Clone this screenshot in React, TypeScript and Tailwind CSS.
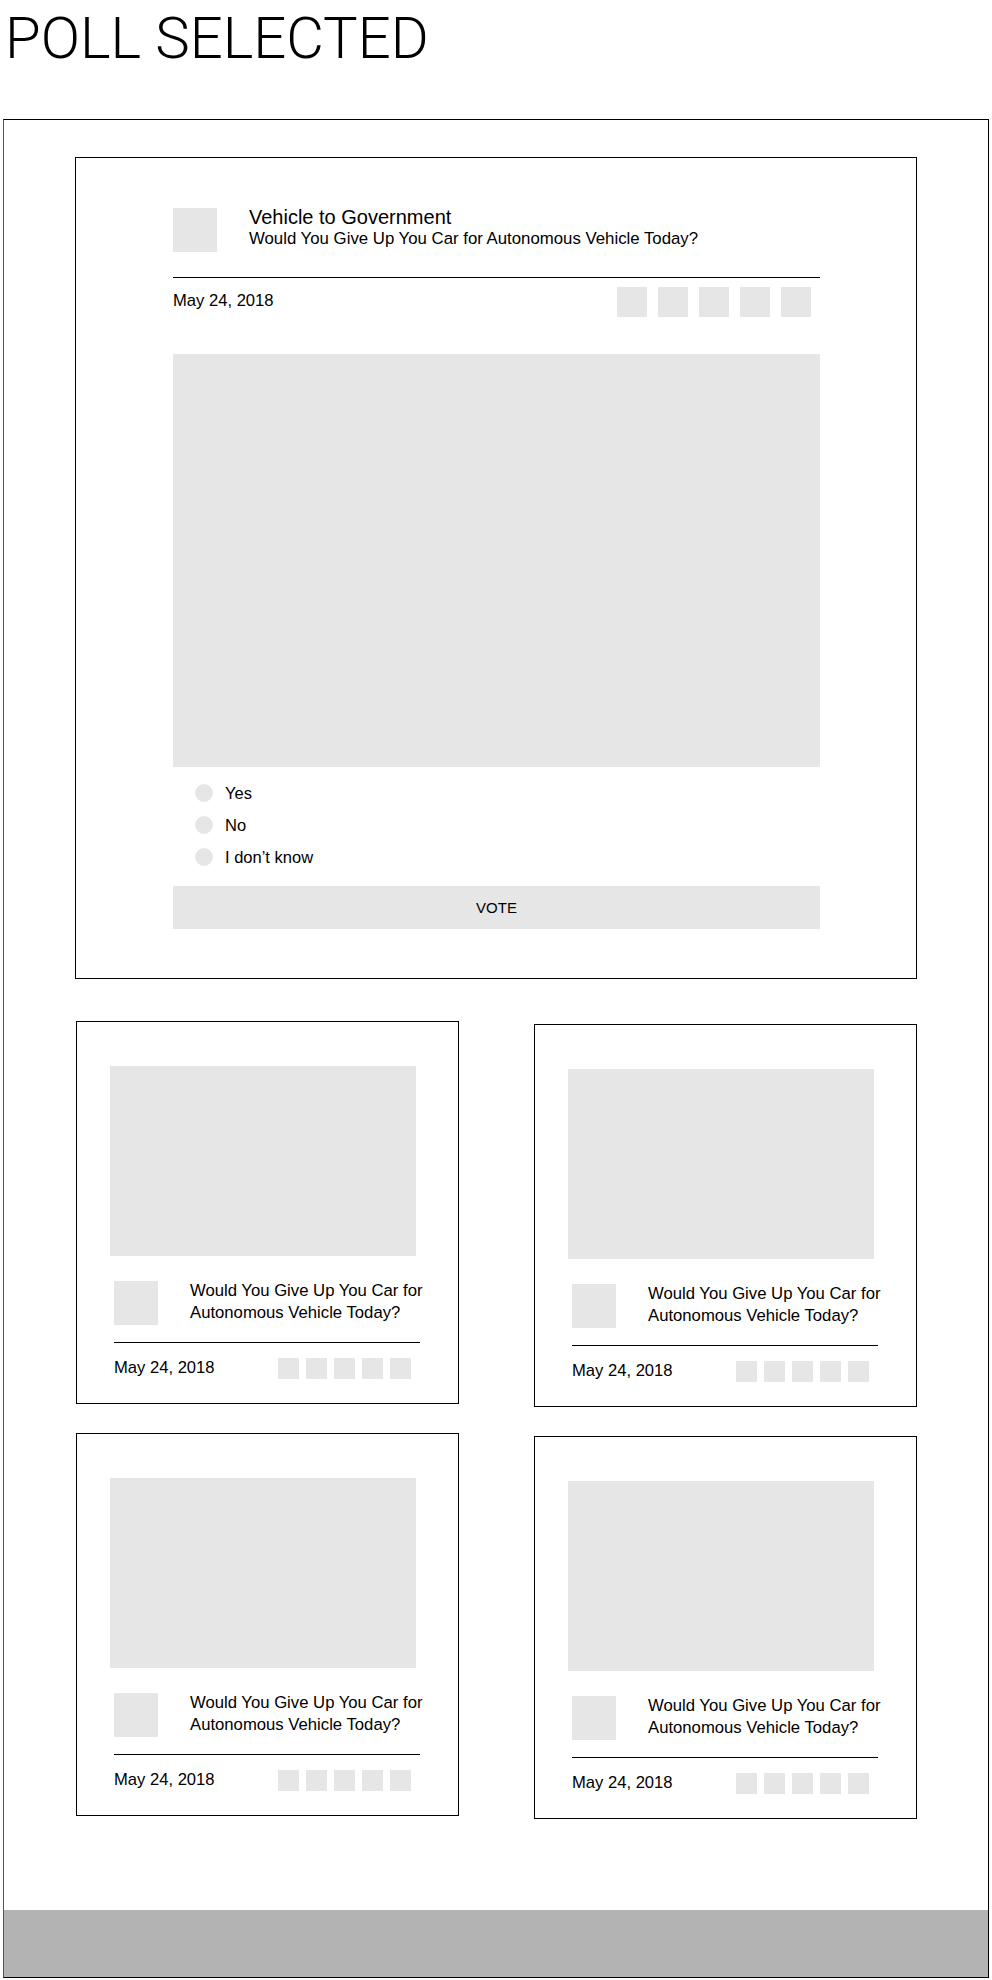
import React from 'react';

const options = ['Yes', 'No', 'I don’t know'];
const question = 'Would You Give Up You Car for Autonomous Vehicle Today?';
const date = 'May 24, 2018';

// five grey share boxes
function ShareBoxes({ size }: { size: 'lg' | 'sm' }) {
  const box = size === 'lg' ? 'w-[30px] h-[30px]' : 'w-[21px] h-[21px]';
  return (
    <div className={size === 'lg' ? 'flex items-center gap-[11px] pr-[9px]' : 'flex items-center gap-[7px] pr-[9px]'}>
      {[0, 1, 2, 3, 4].map(i => (
        <div key={i} className={`${box} bg-[#e6e6e6]`} />
      ))}
    </div>
  );
}

function FeaturedPoll() {
  return (
    <div className="w-[842px] border border-black pl-[97px] pr-[96px] pt-[48px] pb-[49px]">
      {/* Header */}
      <div className="flex items-start">
        <div className="mt-[2px] w-[44px] h-[44px] shrink-0 bg-[#e6e6e6]" />
        <div className="ml-[32px]">
          <div className="text-[20px] leading-[22px]">Vehicle to Government</div>
          <div className="mt-[1px] text-[16.8px] leading-[19px]">{question}</div>
        </div>
      </div>

      <div className="mt-[25px] border-t border-black" />

      <div className="mt-[8px] h-[31px] flex items-center justify-between">
        <span className="text-[16.6px] leading-none">{date}</span>
        <ShareBoxes size="lg" />
      </div>

      {/* Media */}
      <div className="mt-[37px] h-[413px] bg-[#e6e6e6]" />

      {/* Options */}
      <div className="mt-[10px] flex flex-col">
        {options.map(o => (
          <label key={o} className="h-[32px] flex items-center">
            <span className="ml-[22px] w-[18px] h-[18px] rounded-full bg-[#e6e6e6]" />
            <span className="ml-[12px] text-[16.5px] leading-none">{o}</span>
          </label>
        ))}
      </div>

      <button className="mt-[13px] w-full h-[43px] bg-[#e6e6e6] flex items-center justify-center text-[15px] leading-none">
        VOTE
      </button>
    </div>
  );
}

function PollCard() {
  return (
    <div className="w-[383px] h-[383px] border border-black pt-[44px]">
      <div className="ml-[33px] w-[306px] h-[190px] bg-[#e6e6e6]" />
      <div className="ml-[37px] w-[306px]">
        <div className="mt-[25px] flex items-start">
          <div className="w-[44px] h-[44px] shrink-0 bg-[#e6e6e6]" />
          <div className="ml-[32px] -mt-[1px] text-[16.7px] leading-[22px] whitespace-nowrap">
            Would You Give Up You Car for
            <br />
            Autonomous Vehicle Today?
          </div>
        </div>
        <div className="mt-[17px] border-t border-black" />
        <div className="mt-[15px] h-[21px] flex items-center justify-between">
          <span className="text-[16.6px] leading-none">{date}</span>
          <ShareBoxes size="sm" />
        </div>
      </div>
    </div>
  );
}

export default function App() {
  return (
    <div className="min-h-screen bg-white text-black font-['Liberation_Sans',Arial,sans-serif]">
      <h1 className="h-[66px] pl-[5px] pt-[9px] text-[58px] leading-none font-light font-['Roboto',sans-serif]">
        POLL SELECTED
      </h1>

      <div className="mt-[53px] ml-[3px] w-[986px] h-[1859px] border border-black border-l-[#555] flex flex-col">
        <div className="flex-1 pl-[71px] pt-[37px]">
          <FeaturedPoll />

          {/* More polls */}
          <div className="mt-[42px] ml-[1px] flex gap-[75px]">
            <div className="flex flex-col gap-[29px]">
              <PollCard />
              <PollCard />
            </div>
            <div className="mt-[3px] flex flex-col gap-[29px]">
              <PollCard />
              <PollCard />
            </div>
          </div>
        </div>

        {/* Footer */}
        <div className="h-[67px] bg-[#b3b3b3]" />
      </div>
    </div>
  );
}
